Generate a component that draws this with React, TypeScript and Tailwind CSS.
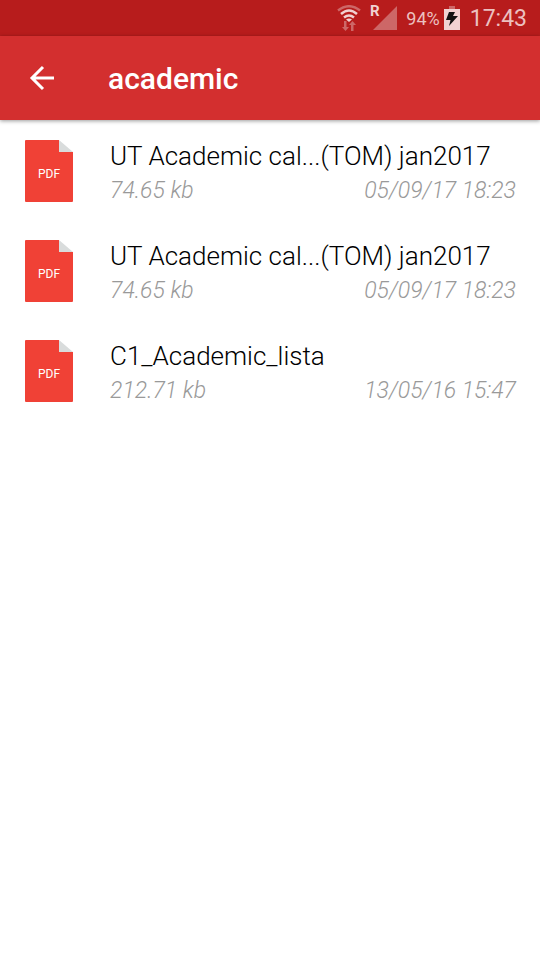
const files = [
  { name: "UT Academic cal...(TOM) jan2017", size: "74.65 kb", date: "05/09/17 18:23" },
  { name: "UT Academic cal...(TOM) jan2017", size: "74.65 kb", date: "05/09/17 18:23" },
  { name: "C1_Academic_lista", size: "212.71 kb", date: "13/05/16 15:47" },
];

function PdfIcon() {
  return (
    <svg width="48" height="62" viewBox="0 0 48 62" aria-hidden="true" className="shrink-0">
      <path d="M1 0H34V12H48V61a1 1 0 0 1-1 1H1a1 1 0 0 1-1-1V1a1 1 0 0 1 1-1Z" fill="#f04136" />
      <path d="M34 0L48 12H34Z" fill="#d9dcdc" />
      <text x="24" y="38" textAnchor="middle" fontSize="12" fill="#fff" fontFamily="Roboto, sans-serif">PDF</text>
    </svg>
  );
}

export default function App() {
  return (
    <div className="min-h-screen bg-white font-[Roboto,sans-serif]">
      <div className="flex h-9 items-center justify-end bg-[#b71c1c] pr-[13px] text-[#ecc0c0]">
        <svg width="24" height="26" viewBox="0 0 24 26" aria-hidden="true" fill="none">
          <path d="M1 5.500Q12-3 23 5.500" stroke="#cd6767" strokeWidth="2.5" />
          <path d="M4 9Q12 2 20 9M7 12.500Q12 8.500 17 12.500" stroke="#f1d2d2" strokeWidth="2.500" />
          <path d="M9 14.500Q12 12.500 15 14.500L12 17Z" fill="#f1d2d2" />
          <path d="M7 16h2.500v6H12l-3.500 4L5 22h2ZM14 26h2.500v-6H19l-3.500-4L12 20h2Z" fill="#cd6767" />
        </svg>
        <svg width="28" height="36" viewBox="0 0 28 36" aria-hidden="true" className="ml-[9px]">
          <path d="M27 6V30H3Z" fill="#cd6767" />
          <text x="0" y="16" fontSize="15" fontWeight="700" fill="#f1d2d2" fontFamily="Roboto, sans-serif">R</text>
        </svg>
        <span className="ml-2 pt-0.5 text-lg">94%</span>
        <svg width="16" height="24" viewBox="0 0 16 24" aria-hidden="true" className="ml-1">
          <path d="M5 0h6v3H5Z" fill="#cd6767" />
          <path d="M0 3H16V24H0Z" fill="#f1d2d2" />
          <path d="M5 6h6l-2 4h5L5 20l1.500-6H2Z" fill="#111" />
        </svg>
        <span className="ml-2.5 pt-0.5 text-[23px]">17:43</span>
      </div>
      <header className="relative flex h-21 items-center bg-[#d32f2f] pl-7 text-white shadow-[0_1px_4px_rgba(0,0,0,0.4)]">
        <button aria-label="Back" className="w-20">
          <svg width="28" height="28" viewBox="0 0 28 28" fill="none" stroke="#fff" strokeWidth="3" aria-hidden="true">
            <path d="M26 14H4M15 3L4 14l11 11" />
          </svg>
        </button>
        <h1 className="pt-0.5 text-3xl font-medium">academic</h1>
      </header>
      <ul className="pt-px">
        {files.map((f, i) => (
          <li key={i} className="flex h-25 items-center gap-[37px] pr-6 pl-[25px]">
            <PdfIcon />
            <div className="flex-1 pt-1">
              <div className="text-[26px] leading-9 font-light text-black">{f.name}</div>
              <div className="flex justify-between text-[23px] leading-[34px] font-light text-[#999] italic">
                <span>{f.size}</span>
                <span>{f.date}</span>
              </div>
            </div>
          </li>
        ))}
      </ul>
    </div>
  );
}
